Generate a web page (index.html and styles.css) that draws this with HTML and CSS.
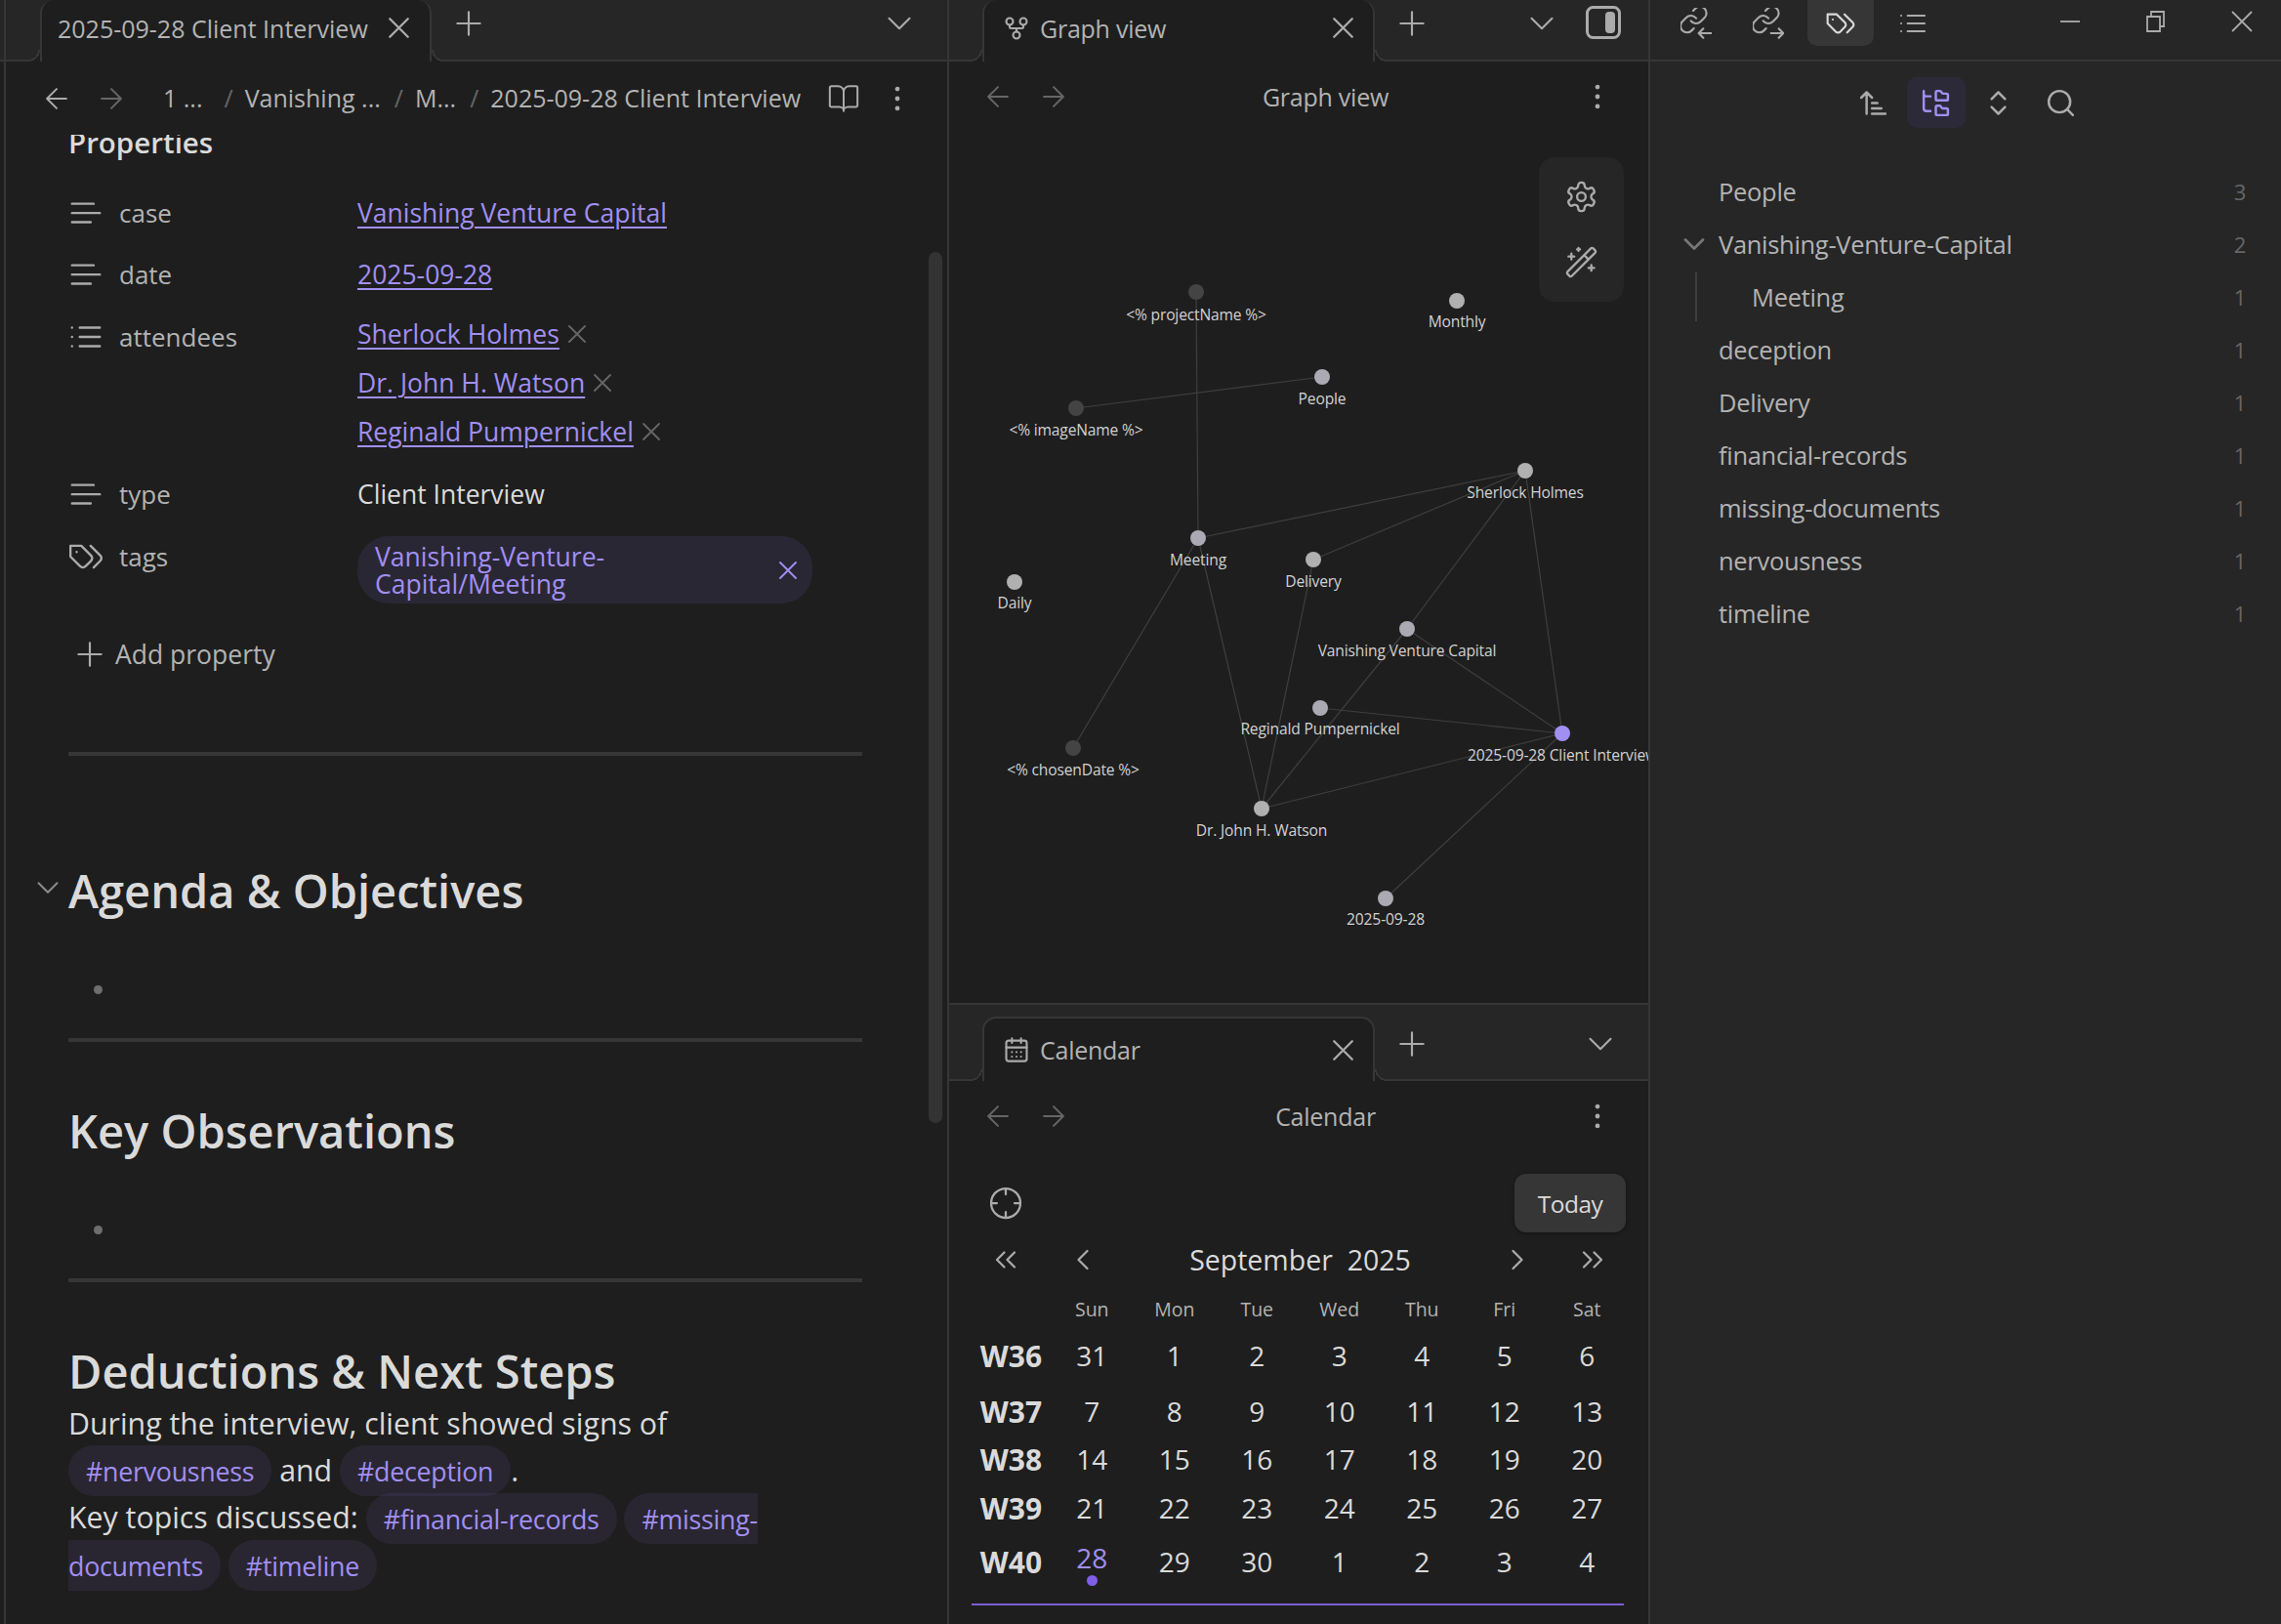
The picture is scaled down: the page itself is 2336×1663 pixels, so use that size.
FILE: index.html

```html
<!DOCTYPE html>
<html lang="en">
<head>
<meta charset="UTF-8" />
<title>2025-09-28 Client Interview</title>
<link rel="stylesheet" href="styles.css">
</head>
<body>

<svg class="defs" aria-hidden="true">
  <symbol id="i-left" viewBox="0 0 24 24"><path d="M19 12H5M12 19l-7-7 7-7"/></symbol>
  <symbol id="i-right" viewBox="0 0 24 24"><path d="M5 12h14M12 5l7 7-7 7"/></symbol>
  <symbol id="i-x" viewBox="0 0 24 24"><path d="M18 6 6 18M6 6l12 12"/></symbol>
  <symbol id="i-plus" viewBox="0 0 24 24"><path d="M5 12h14M12 5v14"/></symbol>
  <symbol id="i-down" viewBox="0 0 24 24"><path d="m6 9 6 6 6-6"/></symbol>
  <symbol id="i-book" viewBox="0 0 24 24"><path d="M12 7v14M3 18a1 1 0 0 1-1-1V4a1 1 0 0 1 1-1h5a4 4 0 0 1 4 4 4 4 0 0 1 4-4h5a1 1 0 0 1 1 1v13a1 1 0 0 1-1 1h-6a3 3 0 0 0-3 3 3 3 0 0 0-3-3z"/></symbol>
  <symbol id="i-more" viewBox="0 0 24 24"><circle cx="12" cy="5" r="1"/><circle cx="12" cy="12" r="1"/><circle cx="12" cy="19" r="1"/></symbol>
  <symbol id="i-text" viewBox="0 0 24 24"><path d="M17 6.1H3M21 12.1H3M15.1 18H3"/></symbol>
  <symbol id="i-list" viewBox="0 0 24 24"><path d="M8 6h13M8 12h13M8 18h13M3 6h.01M3 12h.01M3 18h.01"/></symbol>
  <symbol id="i-tags" viewBox="0 0 24 24"><path d="M9 5H2v7l6.29 6.29c.94.94 2.48.94 3.42 0l3.58-3.58c.94-.94.94-2.48 0-3.42L9 5ZM6 9.01V9M15 5l6.3 6.3a2.4 2.4 0 0 1 0 3.4L17 19"/></symbol>
  <symbol id="i-fork" viewBox="0 0 24 24"><circle cx="12" cy="18" r="3"/><circle cx="6" cy="6" r="3"/><circle cx="18" cy="6" r="3"/><path d="M18 9v2c0 .6-.4 1-1 1H7c-.6 0-1-.4-1-1V9M12 12v3"/></symbol>
  <symbol id="i-gear" viewBox="0 0 24 24"><path d="M12.22 2h-.44a2 2 0 0 0-2 2v.18a2 2 0 0 1-1 1.73l-.43.25a2 2 0 0 1-2 0l-.15-.08a2 2 0 0 0-2.73.73l-.22.38a2 2 0 0 0 .73 2.73l.15.1a2 2 0 0 1 1 1.72v.51a2 2 0 0 1-1 1.74l-.15.09a2 2 0 0 0-.73 2.73l.22.38a2 2 0 0 0 2.73.73l.15-.08a2 2 0 0 1 2 0l.43.25a2 2 0 0 1 1 1.73V20a2 2 0 0 0 2 2h.44a2 2 0 0 0 2-2v-.18a2 2 0 0 1 1-1.73l.43-.25a2 2 0 0 1 2 0l.15.08a2 2 0 0 0 2.73-.73l.22-.39a2 2 0 0 0-.73-2.73l-.15-.08a2 2 0 0 1-1-1.74v-.5a2 2 0 0 1 1-1.74l.15-.09a2 2 0 0 0 .73-2.73l-.22-.38a2 2 0 0 0-2.73-.73l-.15.08a2 2 0 0 1-2 0l-.43-.25a2 2 0 0 1-1-1.73V4a2 2 0 0 0-2-2z"/><circle cx="12" cy="12" r="3"/></symbol>
  <symbol id="i-wand" viewBox="0 0 24 24"><path d="m21.64 3.64-1.28-1.28a1.21 1.21 0 0 0-1.72 0L2.36 18.64a1.21 1.21 0 0 0 0 1.72l1.28 1.28a1.2 1.2 0 0 0 1.72 0L21.64 5.36a1.2 1.2 0 0 0 0-1.72ZM14 7l3 3M5 6v4M19 14v4M10 2v2M7 8H3M21 16h-4M11 3H9"/></symbol>
  <symbol id="i-cal" viewBox="0 0 24 24"><path d="M8 2v4M16 2v4M3 10h18M8 14h.01M12 14h.01M16 14h.01M8 18h.01M12 18h.01M16 18h.01"/><rect x="3" y="4" width="18" height="18" rx="2"/></symbol>
  <symbol id="i-backlink" viewBox="0 0 24 24"><g transform="translate(-2 -3)"><path d="M10 13a5 5 0 0 0 7.54.54l3-3a5 5 0 0 0-7.07-7.07l-1.72 1.71M14 11a5 5 0 0 0-7.54-.54l-3 3a5 5 0 0 0 7.07 7.07l1.71-1.71"/></g><path d="M17.500 16l-3.500 3.500 3.500 3.500M14 19.500h9.500"/></symbol>
  <symbol id="i-outlink" viewBox="0 0 24 24"><g transform="translate(-2 -3)"><path d="M10 13a5 5 0 0 0 7.54.54l3-3a5 5 0 0 0-7.07-7.07l-1.72 1.71M14 11a5 5 0 0 0-7.54-.54l-3 3a5 5 0 0 0 7.07 7.07l1.71-1.71"/></g><path d="M20 16l3.500 3.500-3.500 3.500M14 19.500h9.500"/></symbol>
  <symbol id="i-sort" viewBox="0 0 24 24"><path d="m3 8 4-4 4 4M7 4v16M11 12h4M11 16h7M11 20h10"/></symbol>
  <symbol id="i-tree" viewBox="0 0 24 24"><path d="M20 10a1 1 0 0 0 1-1V6a1 1 0 0 0-1-1h-2.500a1 1 0 0 1-.8-.4l-.9-1.200A1 1 0 0 0 15 3h-2a1 1 0 0 0-1 1v5a1 1 0 0 0 1 1ZM20 21a1 1 0 0 0 1-1v-3a1 1 0 0 0-1-1h-2.900a1 1 0 0 1-.88-.55l-.42-.85a1 1 0 0 0-.92-.6H13a1 1 0 0 0-1 1v5a1 1 0 0 0 1 1ZM3 5a2 2 0 0 0 2 2h3M3 3v13a2 2 0 0 0 2 2h3"/></symbol>
  <symbol id="i-updown" viewBox="0 0 24 24"><path d="m7 15 5 5 5-5M7 9l5-5 5 5"/></symbol>
  <symbol id="i-search" viewBox="0 0 24 24"><path d="m21 21-4.300-4.300"/><circle cx="11" cy="11" r="8"/></symbol>
  <symbol id="i-cross" viewBox="0 0 24 24"><circle cx="12" cy="12" r="10"/><path d="M22 12h-4M6 12H2M12 6V2M12 22v-4"/></symbol>
  <symbol id="i-prev2" viewBox="0 0 24 24"><path d="m11 17-5-5 5-5M18 17l-5-5 5-5"/></symbol>
  <symbol id="i-next2" viewBox="0 0 24 24"><path d="m6 17 5-5-5-5M13 17l5-5-5-5"/></symbol>
  <symbol id="i-prev" viewBox="0 0 24 24"><path d="m15 18-6-6 6-6"/></symbol>
  <symbol id="i-next" viewBox="0 0 24 24"><path d="m9 18 6-6-6-6"/></symbol>
</svg>

<div class="app">

  <section class="pane note-pane">
    <header class="tabbar">
      <div class="tab note-tab">
        <span class="tab-title">2025-09-28 Client Interview</span>
        <svg class="ico tab-close"><use href="#i-x"/></svg>
      </div>
      <svg class="ico new-tab"><use href="#i-plus"/></svg>
      <svg class="ico tab-list"><use href="#i-down"/></svg>
    </header>

    <nav class="navbar note-nav">
      <svg class="ico"><use href="#i-left"/></svg>
      <svg class="ico faint"><use href="#i-right"/></svg>
      <div class="crumbs">
        <span class="crumb-first">1 ...</span><i>/</i>
        <span>Vanishing ...</span><i>/</i>
        <span>M...</span><i>/</i>
        <span class="crumb-last">2025-09-28 Client Interview</span>
      </div>
      <svg class="ico"><use href="#i-book"/></svg>
      <svg class="ico dots"><use href="#i-more"/></svg>
    </nav>

    <div class="note-scroll">
      <div class="scrollbar"></div>
      <div class="note-body">
        <h4 class="props-title">Properties</h4>

        <div class="prop">
          <div class="prop-key"><svg class="ico"><use href="#i-text"/></svg>case</div>
          <div class="prop-val"><a class="link">Vanishing Venture Capital</a></div>
        </div>
        <div class="prop">
          <div class="prop-key"><svg class="ico"><use href="#i-text"/></svg>date</div>
          <div class="prop-val"><a class="link">2025-09-28</a></div>
        </div>
        <div class="prop prop-multi">
          <div class="prop-key"><svg class="ico"><use href="#i-list"/></svg>attendees</div>
          <div class="prop-vals">
            <div class="prop-item"><a class="link">Sherlock Holmes</a><svg class="ico ico-x"><use href="#i-x"/></svg></div>
            <div class="prop-item"><a class="link">Dr. John H. Watson</a><svg class="ico ico-x"><use href="#i-x"/></svg></div>
            <div class="prop-item"><a class="link">Reginald Pumpernickel</a><svg class="ico ico-x"><use href="#i-x"/></svg></div>
          </div>
        </div>
        <div class="prop">
          <div class="prop-key"><svg class="ico"><use href="#i-text"/></svg>type</div>
          <div class="prop-val">Client Interview</div>
        </div>
        <div class="prop prop-tags">
          <div class="prop-key"><svg class="ico"><use href="#i-tags"/></svg>tags</div>
          <div class="tag-pill">
            <span>Vanishing-Venture-Capital/Meeting</span>
            <svg class="ico ico-x"><use href="#i-x"/></svg>
          </div>
        </div>
        <div class="add-prop"><svg class="ico"><use href="#i-plus"/></svg>Add property</div>

        <hr class="rule first-rule">

        <h2 class="heading first-heading"><svg class="ico fold"><use href="#i-down"/></svg>Agenda &amp; Objectives</h2>
        <div class="bullet"></div>
        <hr class="rule">

        <h2 class="heading">Key Observations</h2>
        <div class="bullet"></div>
        <hr class="rule">

        <h2 class="heading">Deductions &amp; Next Steps</h2>
        <p class="para">During the interview, client showed signs of <a class="tag">#nervousness</a> and <a class="tag">#deception</a>.<br>Key topics discussed: <a class="tag">#financial-records</a> <a class="tag">#missing-documents</a> <a class="tag">#timeline</a></p>
      </div>
    </div>
  </section>

  <section class="pane mid-pane">
    <div class="graph-leaf">
      <header class="tabbar">
        <div class="tab mid-tab">
          <svg class="ico ico-tab"><use href="#i-fork"/></svg>
          <span class="tab-title">Graph view</span>
          <svg class="ico tab-close"><use href="#i-x"/></svg>
        </div>
        <svg class="ico new-tab"><use href="#i-plus"/></svg>
        <svg class="ico tab-list"><use href="#i-down"/></svg>
        <svg class="toggle" viewBox="0 0 36 34"><rect x="1.500" y="1.500" width="33" height="31" rx="6"/><rect class="toggle-bar" x="20" y="6" width="10" height="22" rx="4"/></svg>
      </header>
      <nav class="navbar mid-nav">
        <svg class="ico faint"><use href="#i-left"/></svg>
        <svg class="ico faint"><use href="#i-right"/></svg>
        <div class="view-title">Graph view</div>
        <svg class="ico"><use href="#i-more"/></svg>
      </nav>
      <div class="graph">
        <div class="graph-tools">
          <svg class="ico"><use href="#i-gear"/></svg>
          <svg class="ico"><use href="#i-wand"/></svg>
        </div>
        <svg class="graph-svg" viewBox="972 133 716 894">
          <g class="edges">
            <line x1="1225" y1="299" x2="1227" y2="551"/>
            <line x1="1102" y1="418" x2="1354" y2="386"/>
            <line x1="1227" y1="551" x2="1562" y2="482"/>
            <line x1="1345" y1="573" x2="1562" y2="482"/>
            <line x1="1441" y1="644" x2="1562" y2="482"/>
            <line x1="1562" y1="482" x2="1600" y2="751"/>
            <line x1="1227" y1="551" x2="1099" y2="766"/>
            <line x1="1227" y1="551" x2="1292" y2="828"/>
            <line x1="1345" y1="573" x2="1292" y2="828"/>
            <line x1="1441" y1="644" x2="1292" y2="828"/>
            <line x1="1441" y1="644" x2="1600" y2="751"/>
            <line x1="1352" y1="725" x2="1600" y2="751"/>
            <line x1="1292" y1="828" x2="1600" y2="751"/>
            <line x1="1419" y1="920" x2="1600" y2="751"/>
          </g>
          <circle class="n-ghost" cx="1225" cy="299" r="8"/>
          <circle class="n-file" cx="1492" cy="308" r="8"/>
          <circle class="n-tag" cx="1354" cy="386" r="8"/>
          <circle class="n-ghost" cx="1102" cy="418" r="8"/>
          <circle class="n-file" cx="1562" cy="482" r="8"/>
          <circle class="n-tag" cx="1227" cy="551" r="8"/>
          <circle class="n-file" cx="1345" cy="573" r="8"/>
          <circle class="n-file" cx="1039" cy="596" r="8"/>
          <circle class="n-tag" cx="1441" cy="644" r="8"/>
          <circle class="n-tag" cx="1352" cy="725" r="8"/>
          <circle class="n-active" cx="1600" cy="751" r="8"/>
          <circle class="n-ghost" cx="1099" cy="766" r="8"/>
          <circle class="n-file" cx="1292" cy="828" r="8"/>
          <circle class="n-tag" cx="1419" cy="920" r="8"/>
          <g class="labels">
            <text x="1225" y="328">&lt;% projectName %&gt;</text>
            <text x="1492" y="335">Monthly</text>
            <text x="1354" y="414">People</text>
            <text x="1102" y="446">&lt;% imageName %&gt;</text>
            <text x="1562" y="510">Sherlock Holmes</text>
            <text x="1227" y="579">Meeting</text>
            <text x="1345" y="601">Delivery</text>
            <text x="1039" y="623">Daily</text>
            <text x="1441" y="672">Vanishing Venture Capital</text>
            <text x="1352" y="752">Reginald Pumpernickel</text>
            <text x="1600" y="779">2025-09-28 Client Interview</text>
            <text x="1099" y="794">&lt;% chosenDate %&gt;</text>
            <text x="1292" y="856">Dr. John H. Watson</text>
            <text x="1419" y="947">2025-09-28</text>
          </g>
        </svg>
      </div>
    </div>

    <div class="cal-leaf">
      <header class="tabbar cal-tabbar">
        <div class="tab mid-tab cal-tab">
          <svg class="ico ico-tab"><use href="#i-cal"/></svg>
          <span class="tab-title">Calendar</span>
          <svg class="ico tab-close"><use href="#i-x"/></svg>
        </div>
        <svg class="ico new-tab"><use href="#i-plus"/></svg>
        <svg class="ico tab-list"><use href="#i-down"/></svg>
      </header>
      <nav class="navbar mid-nav">
        <svg class="ico faint"><use href="#i-left"/></svg>
        <svg class="ico faint"><use href="#i-right"/></svg>
        <div class="view-title">Calendar</div>
        <svg class="ico"><use href="#i-more"/></svg>
      </nav>
      <div class="calendar">
        <div class="cal-top">
          <svg class="ico cal-cross"><use href="#i-cross"/></svg>
          <button class="today">Today</button>
        </div>
        <div class="cal-month">
          <svg class="ico ico-nav"><use href="#i-prev2"/></svg>
          <svg class="ico ico-nav"><use href="#i-prev"/></svg>
          <div class="month-name">September&nbsp; 2025</div>
          <svg class="ico ico-nav"><use href="#i-next"/></svg>
          <svg class="ico ico-nav"><use href="#i-next2"/></svg>
        </div>
        <div class="cal-grid">
          <span></span><span class="dow">Sun</span><span class="dow">Mon</span><span class="dow">Tue</span><span class="dow">Wed</span><span class="dow">Thu</span><span class="dow">Fri</span><span class="dow">Sat</span>
          <b>W36</b><span>31</span><span>1</span><span>2</span><span>3</span><span>4</span><span>5</span><span>6</span>
          <b>W37</b><span>7</span><span>8</span><span>9</span><span>10</span><span>11</span><span>12</span><span>13</span>
          <b>W38</b><span>14</span><span>15</span><span>16</span><span>17</span><span>18</span><span>19</span><span>20</span>
          <b>W39</b><span>21</span><span>22</span><span>23</span><span>24</span><span>25</span><span>26</span><span>27</span>
          <b>W40</b><span class="is-today">28<i class="today-dot"></i></span><span>29</span><span>30</span><span>1</span><span>2</span><span>3</span><span>4</span>
        </div>
      </div>
    </div>
  </section>

  <aside class="pane side-pane">
    <header class="side-head">
      <div class="side-tab"><svg class="ico"><use href="#i-backlink"/></svg></div>
      <div class="side-tab"><svg class="ico"><use href="#i-outlink"/></svg></div>
      <div class="side-tab is-active"><svg class="ico"><use href="#i-tags"/></svg></div>
      <div class="side-tab"><svg class="ico"><use href="#i-list"/></svg></div>
      <div class="win-btns">
        <svg class="win" viewBox="0 0 24 24"><path d="M2 12h20"/></svg>
        <svg class="win" viewBox="0 0 24 24"><path d="M3 7h13v15H3zM7 7V2h13v15h-4"/></svg>
        <svg class="win" viewBox="0 0 24 24"><path d="M2 2l20 20M22 2 2 22"/></svg>
      </div>
    </header>
    <div class="side-tools">
      <div class="tool"><svg class="ico"><use href="#i-sort"/></svg></div>
      <div class="tool is-on"><svg class="ico"><use href="#i-tree"/></svg></div>
      <div class="tool"><svg class="ico"><use href="#i-updown"/></svg></div>
      <div class="tool"><svg class="ico"><use href="#i-search"/></svg></div>
    </div>
    <ul class="tag-list">
      <li>People<em>3</em></li>
      <li class="has-kids"><svg class="ico tree-fold"><use href="#i-down"/></svg>Vanishing-Venture-Capital<em>2</em></li>
      <li class="kid">Meeting<em>1</em></li>
      <li>deception<em>1</em></li>
      <li>Delivery<em>1</em></li>
      <li>financial-records<em>1</em></li>
      <li>missing-documents<em>1</em></li>
      <li>nervousness<em>1</em></li>
      <li>timeline<em>1</em></li>
    </ul>
  </aside>

</div>
</body>
</html>
```

FILE: styles.css

```css
* { box-sizing: border-box; }
html, body {
  margin: 0; padding: 0; height: 100%;
  background: #1e1e1e;
  color: #dadada;
  font-family: "Open Sans", "Noto Sans", sans-serif;
  font-size: 26.500px;
  overflow: hidden;
}

.defs { display: none; }

.ico {
  width: 27px; height: 27px;
  flex: none;
  fill: none;
  stroke: #ababab;
  stroke-width: 1.800;
  stroke-linecap: round;
  stroke-linejoin: round;
}
.faint { stroke: #666; }
#i-more circle { fill: #ababab; }

.app {
  display: flex;
  height: 1663px;
  background: linear-gradient(#262626 61px, #363636 61px, #363636 63px, #1e1e1e 63px);
}
.pane { height: 100%; display: flex; flex-direction: column; min-width: 0; background: #1e1e1e; }
.note-pane { width: 966px; margin-left: 4px; border-left: 2px solid #363636; }
.mid-pane { width: 718px; border-left: 2px solid #363636; }
.side-pane { width: 648px; background: #262626; border-left: 2px solid #363636; }

/* tabs */
.tabbar {
  height: 63px;
  flex: none;
  display: flex;
  align-items: flex-start;
  background: #262626;
  border-bottom: 2px solid #363636;
}
.tab {
  position: relative;
  height: 63px;
  display: flex;
  align-items: center;
  background: #1e1e1e;
  border: 2px solid #363636;
  border-width: 0 2px;
  border-radius: 14px 14px 0 0;
  color: #b3b3b3;
  font-size: 25px;
}
.tab::before, .tab::after {
  content: "";
  position: absolute;
  bottom: 0;
  width: 12px; height: 12px;
}
.tab::before { left: -14px; background: radial-gradient(circle at 0 0, #262626 10px, #363636 10px, #363636 12px, #1e1e1e 12px); }
.tab::after { right: -14px; background: radial-gradient(circle at 100% 0, #262626 10px, #363636 10px, #363636 12px, #1e1e1e 12px); }
.note-tab { margin-left: 35px; width: 401px; padding: 0 13px 6px 16px; }
.mid-tab { margin-left: 34px; width: 402px; padding: 0 12px 6px 19px; letter-spacing: -0.01em; }
.ico-tab { margin-right: 10px; width: 28px; height: 28px; }
.tab-close { margin-left: auto; width: 37px; height: 37px; stroke-width: 1.500; }
.new-tab { width: 40px; height: 40px; margin: 4px 0 0 18px; stroke-width: 1.300; }
.tab-list { width: 42px; height: 42px; margin: 3px 28px 0 auto; stroke-width: 1.200; }
.toggle { width: 36px; height: 34px; margin: 6px 28px 0 -2px; flex: none; fill: none; stroke: #ababab; stroke-width: 3; }
.toggle-bar { fill: #ababab; stroke: none; }
.graph-leaf .tab-list { margin-right: 26px; }

.cal-tabbar { height: 80px; align-items: flex-end; border-top: 2px solid #363636; }
.cal-tab { height: 66px; border-width: 2px 2px 0; padding-bottom: 0; margin-bottom: -2px; }
.cal-tabbar .new-tab { align-self: flex-start; margin-top: 20px; }
.cal-tabbar .tab-list { align-self: flex-start; margin-top: 19px; }

/* view header */
.navbar { height: 70px; flex: none; display: flex; align-items: center; }
.navbar .ico { width: 34px; height: 34px; stroke-width: 1.400; }
.navbar .faint { stroke: #666; }
.note-nav { height: 75px; padding: 0 34px 0 35px; gap: 22px; color: #b3b3b3; font-size: 25px; }
.crumbs { flex: 1; display: flex; align-items: center; margin-left: 14px; padding-bottom: 2px; white-space: nowrap; }
.crumbs i { font-style: normal; color: #666; margin: 0 12px 0 14px; }
.crumb-first { margin-right: 8px; }
.dots { margin-left: -1px; }

.mid-nav { padding: 2px 35px 0 33px; gap: 23px; color: #b3b3b3; font-size: 25px; letter-spacing: -0.01em; }
.view-title { flex: 1; text-align: center; }

/* note */
.note-scroll { flex: 1; position: relative; overflow: hidden; }
.scrollbar { position: absolute; right: 5px; top: 120px; width: 14px; height: 892px; border-radius: 7px; background: #333; }
.note-body { padding-left: 64px; width: 877px; }
.props-title { margin: -17px 0 0; height: 65px; font-size: 29.500px; line-height: 50px; font-weight: 600; color: #dadada; }

.prop { display: flex; min-height: 63px; align-items: center; }
.prop-key { width: 296px; flex: none; display: flex; align-items: center; gap: 15px; color: #b3b3b3; font-size: 26px; margin-left: -1px; margin-right: 1px; }
.prop-key .ico { width: 38px; height: 38px; stroke-width: 1.500; }
.prop-multi { height: 162px; align-items: flex-start; padding-top: 5px; }
.prop-multi .prop-key { padding-top: 9px; }
.prop-item { height: 50px; display: flex; align-items: center; gap: 2px; }
.link { color: #a18ff2; text-decoration: underline; text-decoration-thickness: 2px; text-underline-offset: 4px; }
.ico-x { width: 32px; height: 32px; stroke: #666; stroke-width: 1.400; }

.prop-tags { align-items: flex-start; padding-top: 12px; height: 93px; min-height: 0; }
.prop-tags .prop-key { padding-top: 2px; }
.tag-pill {
  width: 466px; height: 69px;
  display: flex;
  align-items: center;
  padding: 0 9px 0 18px;
  background: #2a2735;
  border-radius: 32px;
  color: #a18ff2;
  line-height: 28px;
}
.tag-pill span { width: 300px; }
.tag-pill .ico-x { margin-left: auto; stroke: #a18ff2; }

.add-prop { height: 50px; margin-top: 15px; display: flex; align-items: center; gap: 6px; padding-left: 2px; color: #b3b3b3; }
.add-prop .ico { width: 40px; height: 40px; stroke-width: 1.300; }
.rule { height: 4px; margin: 25px 0 0; border: 0; background: #363636; }
.first-rule { margin-top: 75px; }

.heading { position: relative; margin: 61px 0 0; height: 60px; display: flex; align-items: center; font-size: 47px; line-height: 60px; font-weight: 600; white-space: nowrap; }
.first-heading { margin-top: 108px; }
.fold { position: absolute; left: -40px; top: 8px; width: 38px; height: 38px; stroke: #8a8a8a; stroke-width: 1.300; }
.bullet { height: 50px; margin-top: 46px; display: flex; align-items: center; padding-left: 26px; }
.bullet::before { content: ""; width: 9px; height: 9px; border-radius: 50%; background: #6e6e6e; }

.para { margin: 0; font-size: 30.300px; line-height: 47.500px; }
.tag {
  padding: 7.500px 18px;
  border-radius: 28px;
  background: rgba(150, 125, 245, 0.09);
  color: #a18ff2;
  font-size: 26.800px;
  letter-spacing: -0.01em;
}

/* graph */
.graph-leaf { height: 1027px; flex: none; display: flex; flex-direction: column; }
.graph { position: relative; flex: 1; overflow: hidden; }
.graph-svg { display: block; width: 716px; height: 894px; }
.graph-tools {
  position: absolute;
  top: 28px; right: 25px;
  width: 87px; height: 148px;
  background: #262626;
  border-radius: 16px;
  display: flex;
  flex-direction: column;
  align-items: center;
  justify-content: center;
  gap: 32px;
  z-index: 1;
}
.graph-tools .ico { width: 35px; height: 35px; stroke-width: 1.600; }
.edges line { stroke: #3f3f3f; stroke-width: 1.200; }
.n-ghost { fill: #444; }
.n-file { fill: #b0b0b0; }
.n-tag { fill: #abaab3; }
.n-active { fill: #a18ff2; }
.labels text { fill: #d2d2d2; font-size: 15.600px; text-anchor: middle; letter-spacing: -0.01em; }

/* calendar */
.cal-leaf { flex: 1; display: flex; flex-direction: column; min-height: 0; }
.calendar { padding: 25px 23px 0; }
.cal-top { height: 60px; display: flex; align-items: center; justify-content: space-between; padding-left: 17px; }
.cal-cross { width: 36px; height: 36px; stroke-width: 1.500; }
.today {
  width: 114px; height: 60px;
  background: #363636;
  color: #dadada;
  border: 0;
  border-radius: 12px;
  box-shadow: 0 1px 4px rgba(0, 0, 0, 0.4);
  font: inherit;
  font-size: 24.500px;
  letter-spacing: -0.02em;
}
.cal-month { height: 55px; display: flex; align-items: center; padding-left: 17px; font-size: 28.500px; color: #dadada; }
.ico-nav { width: 36px; height: 36px; stroke: #ababab; stroke-width: 1.500; }
.cal-month .ico-nav:nth-child(2) { margin-left: 43px; }
.month-name { flex: 1; text-align: center; }
.cal-month .ico-nav:nth-child(5) { margin: 0 16px 0 41px; }

.cal-grid {
  display: grid;
  grid-template-columns: 81px repeat(7, 84.500px);
  grid-template-rows: 42px 54px 60px 38px 62px 48px;
  width: 668px;
  height: 325px;
  margin-top: 2px;
  border-bottom: 2px solid #7a5fd6;
  align-items: center;
  justify-items: center;
  align-content: start;
  font-size: 28px;
}
.dow { font-size: 19.500px; color: #b3b3b3; }
.cal-grid b { font-weight: 700; font-size: 30px; }
.is-today { position: relative; color: #a18ff2; margin-top: -8px; }
.today-dot { position: absolute; left: 50%; bottom: -10px; width: 11px; height: 11px; margin-left: -5px; border-radius: 50%; background: #7f5fe8; }

/* right sidebar */
.side-head { height: 63px; flex: none; display: flex; align-items: flex-start; border-bottom: 2px solid #363636; padding-left: 13px; }
.side-tab { width: 68px; height: 47px; margin-right: 6px; border-radius: 0 0 10px 10px; display: flex; align-items: center; justify-content: center; }
.side-tab .ico { width: 32px; height: 32px; stroke-width: 1.600; }
.side-tab.is-active { background: #363636; }
.side-tab.is-active .ico { stroke: #dadada; }
.win-btns { margin-left: auto; display: flex; gap: 64px; padding: 10px 28px 0 0; }
.win { width: 24px; height: 24px; fill: none; stroke: #ababab; stroke-width: 1.800; }
.side-tools { height: 52px; margin-top: 16px; flex: none; display: flex; justify-content: center; gap: 4px; padding-left: 3px; }
.tool { width: 60px; height: 52px; border-radius: 10px; display: flex; align-items: center; justify-content: center; }
.tool .ico { width: 33px; height: 33px; }
.tool.is-on { background: #2c2a38; }
.tool.is-on .ico { stroke: #a18ff2; }
.tag-list { list-style: none; margin: 38px 0 0; padding: 0 36px 0 70px; color: #b3b3b3; font-size: 25.500px; letter-spacing: -0.012em; }
.tag-list li { position: relative; height: 54px; display: flex; align-items: center; justify-content: space-between; }
.tag-list em { font-style: normal; font-size: 22px; color: #666; }
.tree-fold { position: absolute; left: -43px; top: 9px; width: 36px; height: 36px; stroke: #777; stroke-width: 1.800; }
.kid { padding-left: 34px; }
.kid::before { content: ""; position: absolute; left: -24px; top: 2px; height: 50px; border-left: 2px solid #3f3f3f; }
```
